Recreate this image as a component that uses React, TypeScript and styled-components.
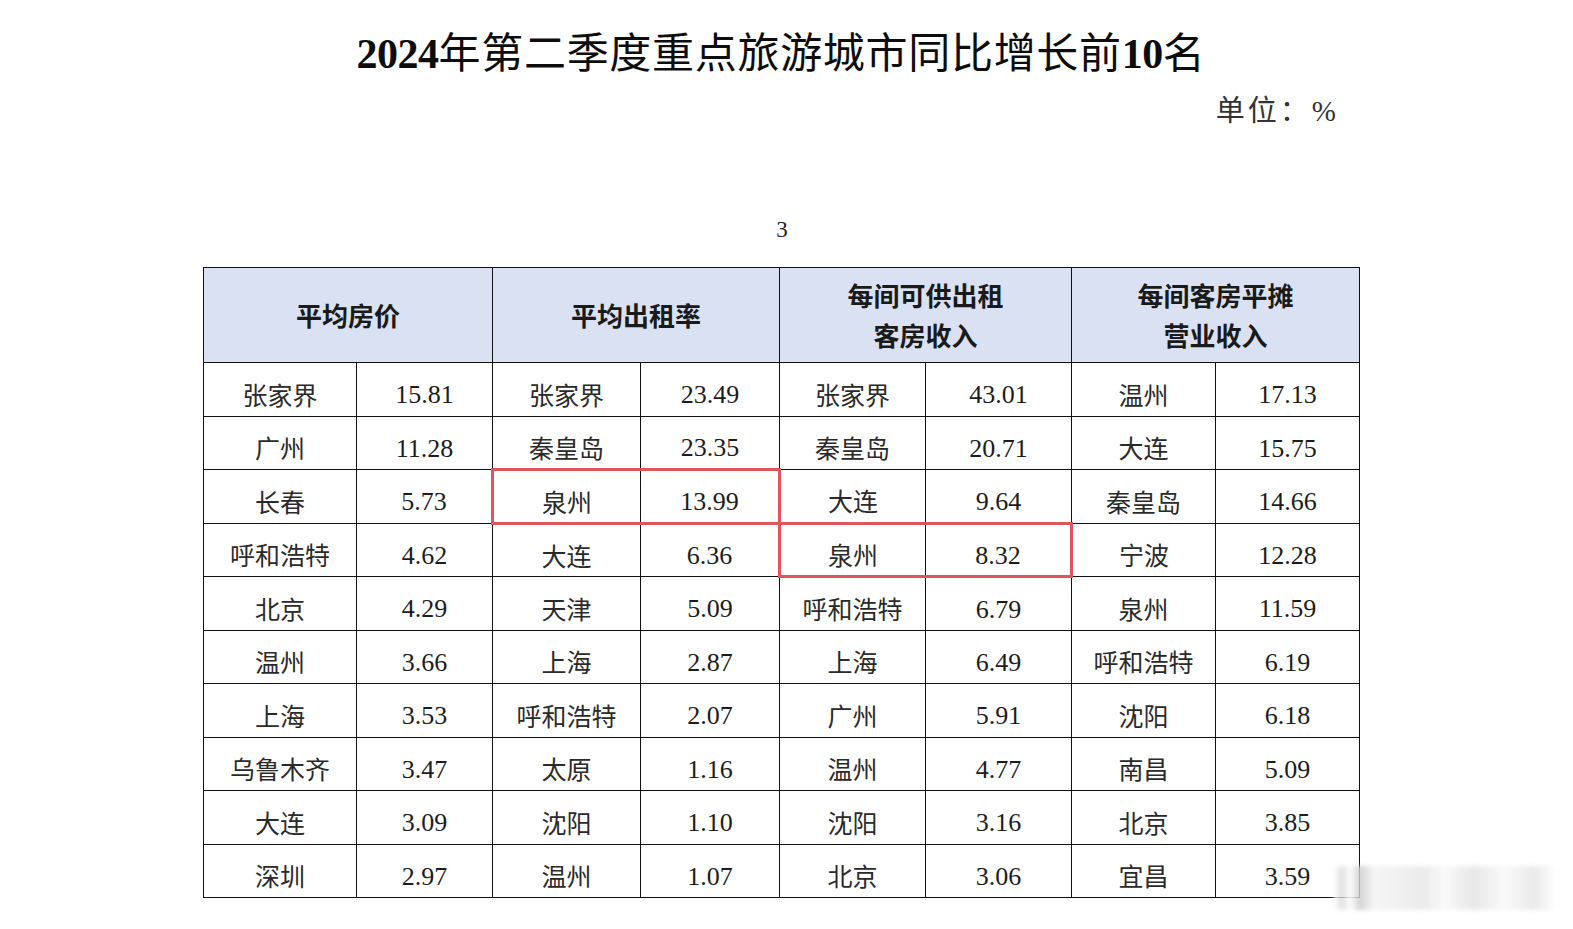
import React from 'react';
import styled, { createGlobalStyle } from 'styled-components';

const GlobalStyle = createGlobalStyle`
  html, body {
    margin: 0;
    padding: 0;
    background: #ffffff;
  }
  body {
    font-family: "Liberation Serif", "Noto Sans CJK SC", serif;
    color: #111;
  }
`;

const Page = styled.div`
  position: relative;
  width: 1573px;
  height: 929px;
  overflow: hidden;
  background: #fff;
`;

const Sheet = styled.div`
  width: 1156px;
  margin-left: 203px;
  display: flex;
  flex-direction: column;
`;

const Title = styled.h1`
  margin: 29px 0 0;
  height: 50px;
  line-height: 50px;
  text-align: center;
  font-size: 42px;
  font-weight: 400;
  letter-spacing: 0.7px;
  color: #0d0d0d;
  font-family: "Liberation Serif", "Noto Sans CJK SC", serif;
`;

const Num = styled.span`
  font-weight: 700;
  font-family: "Liberation Serif", serif;
  letter-spacing: -0.5px;
`;

const Unit = styled.div`
  margin-top: 12px;
  padding-right: 20px;
  height: 40px;
  line-height: 40px;
  text-align: right;
  font-size: 29px;
  color: #333;
  letter-spacing: 3px;
`;

const PageNo = styled.div`
  margin-top: 84px;
  height: 30px;
  line-height: 30px;
  text-align: center;
  font-size: 23px;
  color: #222;
  padding-left: 2px;
`;

const Table = styled.table`
  margin-top: 22px;
  width: 1156px;
  border-collapse: collapse;
  table-layout: fixed;
  border: 1.5px solid #111;
`;

const HeadCell = styled.th`
  height: 94px;
  background: #d9e1f2;
  border: 1.5px solid #111;
  font-family: "Noto Sans CJK SC", sans-serif;
  font-weight: 700;
  font-size: 26px;
  line-height: 40px;
  color: #1a1a1a;
  text-align: center;
  vertical-align: middle;
  padding: 0;
`;

type CellProps = { $first?: boolean; $last?: boolean; $mark?: boolean };

const Cell = styled.td<CellProps>`
  height: 53.5px;
  box-sizing: border-box;
  padding: 12px 0 0;
  border: 1.5px solid #111;
  text-align: center;
  vertical-align: middle;
  font-size: 26px;
  line-height: 30px;
  color: #1c1c1c;
  font-family: "Liberation Serif", "Noto Sans CJK SC", serif;
  ${(p) => p.$mark && `
    border-top: 3px solid #e0555c;
    border-bottom: 3px solid #e0555c;
  `}
  ${(p) => p.$mark && p.$first && `border-left: 3px solid #e0555c;`}
  ${(p) => p.$mark && p.$last && `border-right: 3px solid #e0555c;`}
`;

const City = styled.span`
  font-family: "Noto Sans CJK SC", sans-serif;
  font-size: 25px;
  line-height: 30px;
  font-weight: 400;
  color: #2a2a2a;
`;

const Watermark = styled.div`
  position: absolute;
  left: 1334px;
  top: 866px;
  width: 222px;
  height: 44px;
  background: linear-gradient(
    90deg,
    rgba(255, 255, 255, 0.9) 0px,
    rgba(210, 210, 210, 0.7) 8px,
    rgba(255, 255, 255, 0.9) 16px,
    rgba(200, 200, 200, 0.8) 26px,
    rgba(245, 245, 245, 0.9) 40px,
    rgba(230, 230, 230, 0.8) 90px,
    rgba(250, 250, 250, 0.9) 110px,
    rgba(225, 225, 225, 0.8) 140px,
    rgba(250, 250, 250, 0.9) 170px,
    rgba(228, 228, 228, 0.8) 200px,
    rgba(255, 255, 255, 0.9) 222px
  );
  filter: blur(2px);
`;

const headers = ['平均房价', '平均出租率', '每间可供出租\n客房收入', '每间客房平摊\n营业收入'];

type Pair = [string, string];

const data: Pair[][] = [
  [['张家界', '15.81'], ['张家界', '23.49'], ['张家界', '43.01'], ['温州', '17.13']],
  [['广州', '11.28'], ['秦皇岛', '23.35'], ['秦皇岛', '20.71'], ['大连', '15.75']],
  [['长春', '5.73'], ['泉州', '13.99'], ['大连', '9.64'], ['秦皇岛', '14.66']],
  [['呼和浩特', '4.62'], ['大连', '6.36'], ['泉州', '8.32'], ['宁波', '12.28']],
  [['北京', '4.29'], ['天津', '5.09'], ['呼和浩特', '6.79'], ['泉州', '11.59']],
  [['温州', '3.66'], ['上海', '2.87'], ['上海', '6.49'], ['呼和浩特', '6.19']],
  [['上海', '3.53'], ['呼和浩特', '2.07'], ['广州', '5.91'], ['沈阳', '6.18']],
  [['乌鲁木齐', '3.47'], ['太原', '1.16'], ['温州', '4.77'], ['南昌', '5.09']],
  [['大连', '3.09'], ['沈阳', '1.10'], ['沈阳', '3.16'], ['北京', '3.85']],
  [['深圳', '2.97'], ['温州', '1.07'], ['北京', '3.06'], ['宜昌', '3.59']],
];

// highlighted (row, group) pairs
const marked = new Set(['2-1', '3-2']);

const colWidths = [153, 136, 148, 139, 146, 146, 144, 144];

export default function App() {
  return (
    <>
      <GlobalStyle />
      <Page>
        <Sheet>
          <Title>
            <Num>2024</Num>年第二季度重点旅游城市同比增长前<Num>10</Num>名
          </Title>
          <Unit>单位：%</Unit>
          <PageNo>3</PageNo>
          <Table>
            <colgroup>
              {colWidths.map((w, i) => (
                <col key={i} style={{ width: w }} />
              ))}
            </colgroup>
            <thead>
              <tr>
                {headers.map((h) => (
                  <HeadCell key={h} colSpan={2}>
                    {h.split('\n').map((line, i) => (
                      <div key={i}>{line}</div>
                    ))}
                  </HeadCell>
                ))}
              </tr>
            </thead>
            <tbody>
              {data.map((row, r) => (
                <tr key={r}>
                  {row.map(([city, value], g) => {
                    const mark = marked.has(`${r}-${g}`);
                    return (
                      <React.Fragment key={g}>
                        <Cell $mark={mark} $first>
                          <City>{city}</City>
                        </Cell>
                        <Cell $mark={mark} $last>
                          {value}
                        </Cell>
                      </React.Fragment>
                    );
                  })}
                </tr>
              ))}
            </tbody>
          </Table>
        </Sheet>
        <Watermark />
      </Page>
    </>
  );
}
